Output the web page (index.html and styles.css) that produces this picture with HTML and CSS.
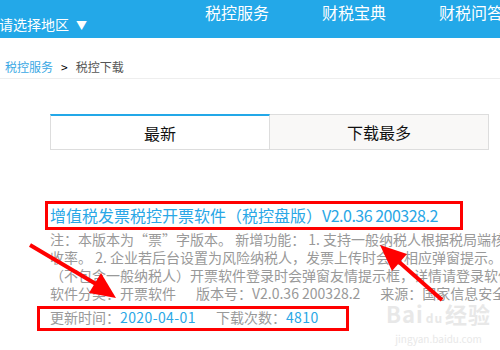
FILE: index.html
```html
<!DOCTYPE html>
<html lang="zh-CN">
<head>
    <meta charset="UTF-8">
    <title>税控下载</title>
    <link rel="stylesheet" href="styles.css">
</head>
<body>
    <div class="page">
        <div class="topbar">
            <div class="region">请选择地区<span class="caret">▼</span></div>
            <ul class="nav">
                <li>税控服务</li>
                <li>财税宝典</li>
                <li>财税问答</li>
            </ul>
        </div>

        <div class="crumbs">
            <a href="#">税控服务</a><span class="sep">&gt;</span><span class="here">税控下载</span>
        </div>

        <div class="tabs">
            <div class="tab active">最新</div>
            <div class="tab">下载最多</div>
        </div>

        <div class="item">
            <a class="item-title" href="#">增值税发票税控开票软件（税控盘版）<span class="ver">V2.0.36 200328.2</span></a>
            <p class="desc">
                注：本版本为“票”字版本。 新增功能： 1. 支持一般纳税人根据税局端核定的征<br>
                收率。 2. 企业若后台设置为风险纳税人，发票上传时会有相应弹窗提示。 3. 小规模<br>
                （不包含一般纳税人）开票软件登录时会弹窗友情提示框，详情请登录软件查看。<br>
                <span class="field">软件分类：开票软件</span><span class="field">版本号：V2.0.36 200328.2</span><span class="field">来源：国家信息安全工程技术研究中心</span>
            </p>
            <p class="meta">
                <span class="field">更新时间：<em>2020-04-01</em></span><span class="field">下载次数：<em>4810</em></span>
            </p>
        </div>
    </div>

    <div class="watermark">
        <div class="wm-logo">Bai<span class="paw">du</span>经验</div>
        <div class="wm-url">jingyan.baidu.com</div>
    </div>

    <!-- red marks drawn over the screenshot -->
    <svg class="marks" width="500" height="350" viewBox="0 0 500 350">
        <rect x="46.5" y="202.5" width="415" height="26" fill="none" stroke="#f00" stroke-width="3"/>
        <rect x="38.5" y="307.5" width="309" height="22" fill="none" stroke="#f00" stroke-width="3"/>
        <line x1="30" y1="245" x2="96" y2="284" stroke="#f00" stroke-width="4"/>
        <polygon points="116,298 89,293 101,273" fill="#f00"/>
        <line x1="442" y1="300" x2="398" y2="261" stroke="#f00" stroke-width="4"/>
        <polygon points="380,245 407,254 392,271" fill="#f00"/>
    </svg>
</body>
</html>
```

FILE: styles.css
```css
body {
    margin: 0;
    overflow: hidden;
    font-family: "Noto Sans CJK SC", "Liberation Sans", sans-serif;
    background-color: #fff;
    color: #333;
}

.page {
    width: 640px;
}

.topbar {
    display: flex;
    height: 38px;
    background-color: #23a8e8;
    color: #fff;
}

.region {
    flex: 0 0 206px;
    margin-left: -1px;
    padding-top: 14px;
    font-size: 14px;
    line-height: 20px;
}

.region .caret {
    margin-left: 7px;
    font-size: 11px;
}

.nav {
    display: flex;
    gap: 53px;
    margin: 0;
    padding: 2px 0 0 0;
    list-style: none;
    font-size: 16px;
    line-height: 20px;
}

.crumbs {
    padding: 21px 0 3px 5px;
    font-size: 12px;
    line-height: 16px;
    border-bottom: 1px solid #eee;
}

.crumbs a {
    color: #3aa8e4;
    text-decoration: none;
}

.crumbs .sep {
    margin: 0 8px;
    color: #000;
}

.crumbs .here {
    color: #555;
}

.tabs {
    display: flex;
    width: 439px;
    margin: 35px 0 0 50px;
}

.tab {
    flex: 1;
    height: 34px;
    line-height: 34px;
    text-align: center;
    font-size: 16px;
    color: #111;
    background-color: #f9f8f7;
    border: 1px solid #ddd;
}

.tab + .tab {
    border-left: none;
}

.tab.active {
    height: 33px;
    background-color: #fff;
    border-top: 2px solid #23a8e8;
}

.item {
    margin: 55px 0 0 50px;
}

.item-title {
    display: block;
    font-size: 16px;
    line-height: 20px;
    color: #2aa7e6;
    text-decoration: none;
    white-space: nowrap;
}

.item-title .ver {
    letter-spacing: -0.5px;
}

.desc {
    margin: 5px 0 0 0;
    font-size: 14px;
    line-height: 18px;
    color: #999;
    white-space: nowrap;
}

.meta {
    margin: 6px 0 0 0;
    font-size: 14px;
    line-height: 18px;
    color: #999;
    white-space: nowrap;
}

.field {
    margin-right: 20px;
}

.meta em {
    font-style: normal;
    color: #2aa7e6;
    letter-spacing: 0.4px;
}

.watermark {
    position: absolute;
    left: 386px;
    top: 299px;
    color: #e8e8e8;
    text-align: center;
}

.wm-logo {
    font-size: 22px;
    line-height: 28px;
    font-weight: bold;
    letter-spacing: 1px;
}

.wm-logo .paw {
    font-size: 12px;
    margin: 0 2px;
}

.wm-url {
    font-size: 10px;
    line-height: 14px;
}

.marks {
    position: absolute;
    left: 0;
    top: 0;
    pointer-events: none;
}
```
